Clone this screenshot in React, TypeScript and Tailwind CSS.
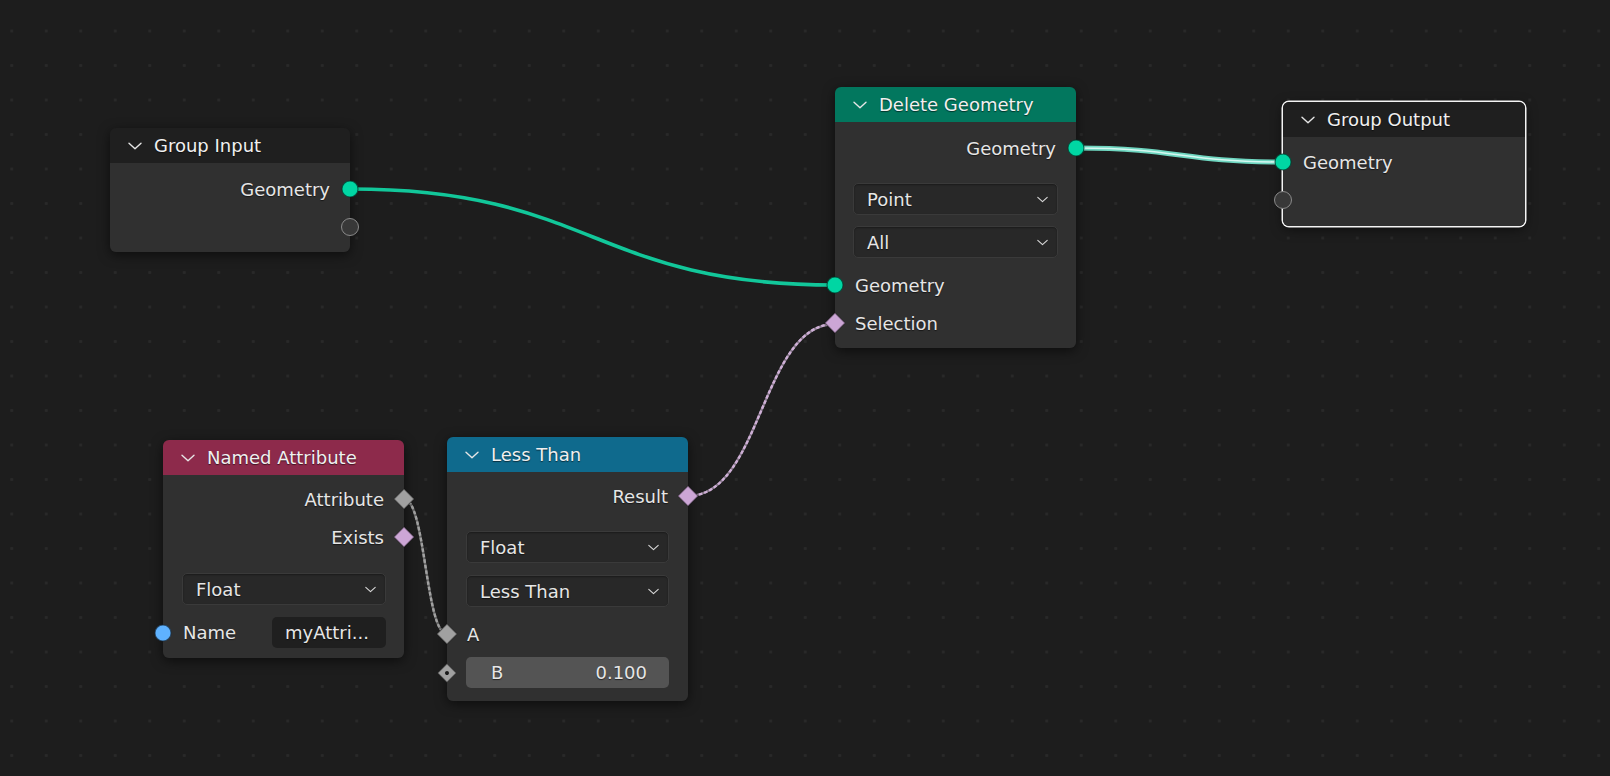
import React from "react";

type SockKind = "geo" | "empty" | "gray" | "pink" | "blue" | "graySingle";

function Chevron({ className }: { className: string }) {
  return (
    <svg viewBox="0 0 14 8" className={className} fill="none">
      <path d="M1 1.2 L7 6.8 L13 1.2" stroke="currentColor" strokeWidth="1.4" strokeLinecap="round" strokeLinejoin="round" />
    </svg>
  );
}

function Socket({ kind, side }: { kind: SockKind; side: "left" | "right" }) {
  const pos =
    side === "left"
      ? "absolute left-0 top-1/2 -translate-x-1/2 -translate-y-1/2 flex items-center justify-center"
      : "absolute right-0 top-1/2 translate-x-1/2 -translate-y-1/2 flex items-center justify-center";

  if (kind === "geo")
    return (
      <div className={pos}>
        <div className="w-[17px] h-[17px] rounded-full bg-[#00d6a3] border border-black/60" />
      </div>
    );
  if (kind === "blue")
    return (
      <div className={pos}>
        <div className="w-[17px] h-[17px] rounded-full bg-[#5fb2ff] border border-black/60" />
      </div>
    );
  if (kind === "empty")
    return (
      <div className={pos}>
        <div className="w-[18px] h-[18px] rounded-full bg-[#383838] border-[1.5px] border-[#8a8a8a]" />
      </div>
    );
  if (kind === "pink")
    return (
      <div className={pos}>
        <div className="w-[15px] h-[15px] rotate-45 rounded-[1px] bg-[#cca6d6] border border-black/50" />
      </div>
    );
  if (kind === "gray")
    return (
      <div className={pos}>
        <div className="w-[15px] h-[15px] rotate-45 rounded-[1px] bg-[#a1a1a1] border border-black/50" />
      </div>
    );
  return (
    <div className={pos}>
      <div className="w-[14px] h-[14px] rotate-45 rounded-[1px] bg-[#a1a1a1] border border-black/50 flex items-center justify-center">
        <div className="w-[4px] h-[4px] rounded-full bg-[#1a1a1a]" />
      </div>
    </div>
  );
}

function SocketRow({ label, side, kind }: { label?: string; side: "left" | "right"; kind: SockKind }) {
  return (
    <div
      className={
        side === "right"
          ? "relative h-[38px] flex items-center justify-end px-[20px]"
          : "relative h-[38px] flex items-center justify-start px-[20px]"
      }
    >
      {label}
      <Socket kind={kind} side={side} />
    </div>
  );
}

function Dropdown({ label, className }: { label: string; className: string }) {
  return (
    <div
      className={`h-[32px] rounded-[5px] bg-[#282828] border border-[#3a3a3a] shadow-[inset_0_1px_2px_rgba(0,0,0,0.35)] flex items-center justify-between pl-[13px] pr-[9px] ${className}`}
    >
      <span>{label}</span>
      <Chevron className="w-[11px] h-[7px] text-[#d8d8d8]" />
    </div>
  );
}

function Node({
  pos,
  title,
  head,
  selected,
  children,
}: {
  pos: string;
  title: string;
  head: string;
  selected?: boolean;
  children: React.ReactNode;
}) {
  return (
    <div
      className={
        selected
          ? `absolute ${pos} rounded-[6px] ring-[1.5px] ring-[#f4f4f4] shadow-[0_3px_12px_rgba(0,0,0,0.55)]`
          : `absolute ${pos} rounded-[6px] shadow-[0_3px_12px_rgba(0,0,0,0.55)]`
      }
    >
      <div className={`h-[35px] rounded-t-[6px] flex items-center pl-[18px] gap-[12px] text-[#f0f0f0] ${head}`}>
        <Chevron className="w-[14px] h-[8px] text-[#e6e6e6]" />
        <span>{title}</span>
      </div>
      <div className="bg-[#303030] rounded-b-[6px] flex flex-col">{children}</div>
    </div>
  );
}

const curve = (x1: number, y1: number, x2: number, y2: number) => {
  const h = Math.abs(x2 - x1) * 0.5;
  return `M${x1} ${y1} C${x1 + h} ${y1} ${x2 - h} ${y2} ${x2} ${y2}`;
};

export default function App() {
  const geoIn = curve(351, 189, 835, 285);
  const geoOut = curve(1077, 148, 1283, 162);
  const result = curve(688, 496, 835, 324);
  const attr = curve(404, 499, 447, 634);

  return (
    <div className="relative w-[1610px] h-[776px] overflow-hidden bg-[#1d1d1d] bg-[radial-gradient(circle,#292929_1.3px,transparent_1.9px)] bg-[length:34.5px_34.5px] bg-[position:-5.5px_13.75px] font-['DejaVu_Sans',sans-serif] text-[18px] text-[#e6e6e6] [text-shadow:0_1px_1px_rgba(0,0,0,0.55)]">
      {/* links */}
      <svg className="absolute inset-0" width="1610" height="776" viewBox="0 0 1610 776" fill="none">
        <path d={geoIn} stroke="#12c79a" strokeWidth="3.6" />
        <path d={geoOut} stroke="#6fd6c0" strokeWidth="5" />
        <path d={geoOut} stroke="#d6f8f1" strokeWidth="1.6" />
        <path d={result} stroke="#8a7a8e" strokeWidth="2.4" />
        <path d={result} stroke="#cfb0d7" strokeWidth="2.4" strokeDasharray="3.5 2" />
        <path d={attr} stroke="#6a6a6a" strokeWidth="2.4" />
        <path d={attr} stroke="#a2a2a2" strokeWidth="2.4" strokeDasharray="3.5 2" />
      </svg>

      <Node pos="left-[110px] top-[128px] w-[240px]" title="Group Input" head="bg-[#1f1f1f]">
        <div className="pt-[7px] pb-[6px]">
          <SocketRow label="Geometry" side="right" kind="geo" />
          <SocketRow side="right" kind="empty" />
        </div>
      </Node>

      <Node pos="left-[835px] top-[87px] w-[241px]" title="Delete Geometry" head="bg-[#02775e]">
        <div className="pt-[7px] pb-[6px] flex flex-col">
          <SocketRow label="Geometry" side="right" kind="geo" />
          <Dropdown label="Point" className="mx-[18px] mt-[16px]" />
          <Dropdown label="All" className="mx-[18px] mt-[11px]" />
          <div className="mt-[8px]">
            <SocketRow label="Geometry" side="left" kind="geo" />
            <SocketRow label="Selection" side="left" kind="pink" />
          </div>
        </div>
      </Node>

      <Node pos="left-[1283px] top-[102px] w-[242px]" title="Group Output" head="bg-[#1f1f1f]" selected>
        <div className="pt-[6px] pb-[7px]">
          <SocketRow label="Geometry" side="left" kind="geo" />
          <SocketRow side="left" kind="empty" />
        </div>
      </Node>

      <Node pos="left-[163px] top-[440px] w-[241px]" title="Named Attribute" head="bg-[#8d2a4b]">
        <div className="pt-[5px] pb-[10px] flex flex-col">
          <SocketRow label="Attribute" side="right" kind="gray" />
          <SocketRow label="Exists" side="right" kind="pink" />
          <Dropdown label="Float" className="ml-[19px] mr-[18px] mt-[17px]" />
          <div className="relative mt-[12px] h-[31px] flex items-center pl-[20px] pr-[18px]">
            <span>Name</span>
            <div className="ml-auto w-[114px] h-[31px] rounded-[5px] bg-[#1f1f1f] flex items-center pl-[13px]">
              myAttri...
            </div>
            <Socket kind="blue" side="left" />
          </div>
        </div>
      </Node>

      <Node pos="left-[447px] top-[437px] w-[241px]" title="Less Than" head="bg-[#0f6a8d]">
        <div className="pt-[5px] pb-[13px] flex flex-col">
          <SocketRow label="Result" side="right" kind="pink" />
          <Dropdown label="Float" className="mx-[19px] mt-[16px]" />
          <Dropdown label="Less Than" className="mx-[19px] mt-[12px]" />
          <div className="mt-[8px]">
            <SocketRow label="A" side="left" kind="gray" />
          </div>
          <div className="relative mt-[4px] h-[31px] flex items-center">
            <div className="mx-[19px] flex-1 h-[31px] rounded-[5px] bg-[#545454] flex items-center justify-between pl-[25px] pr-[22px]">
              <span>B</span>
              <span>0.100</span>
            </div>
            <Socket kind="graySingle" side="left" />
          </div>
        </div>
      </Node>
    </div>
  );
}
